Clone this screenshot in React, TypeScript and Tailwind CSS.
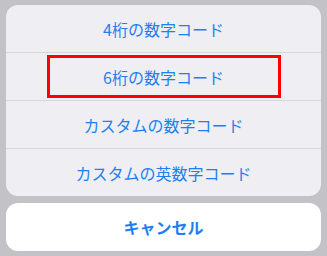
import React from "react";

const options = [
  "4桁の数字コード",
  "6桁の数字コード",
  "カスタムの数字コード",
  "カスタムの英数字コード",
];

export default function App() {
  return (
    <div
      className="w-[327px] h-[256px] bg-[#c3c2c7] px-[6px] pt-[5px] flex flex-col gap-[7px]"
      style={{ fontFamily: '"Noto Sans CJK JP", "Noto Sans", sans-serif' }}
    >
      {/* option group */}
      <div className="bg-[#efeff3] rounded-[12px] flex flex-col overflow-hidden">
        {options.map((label, i) => (
          <div
            key={label}
            className={
              "relative h-[47px] flex items-center justify-center text-[16px] text-[#1f7ff0] " +
              (i > 0 ? "border-t border-[#d8d8dc] h-[48px]" : "")
            }
          >
            {label}
            {i === 1 && (
              <div className="absolute left-[41px] top-[2px] w-[234px] h-[43px] border-[3px] border-[#ff0000]" />
            )}
          </div>
        ))}
      </div>

      {/* cancel */}
      <div className="bg-white rounded-[12px] h-[48px] flex items-center justify-center text-[16px] font-bold text-[#1f7ff0]">
        キャンセル
      </div>
    </div>
  );
}
